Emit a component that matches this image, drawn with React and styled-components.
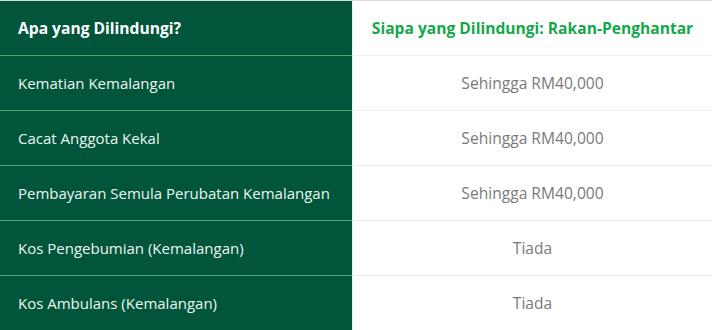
import React from 'react';
import styled, { createGlobalStyle } from 'styled-components';

const GlobalStyle = createGlobalStyle`
  html, body {
    margin: 0;
    padding: 0;
    background: #ffffff;
  }
  body {
    font-family: "Open Sans", "Noto Sans", sans-serif;
  }
`;

const Table = styled.div`
  width: 712px;
  display: grid;
  grid-template-columns: 352px 1fr;
  border-top: 1px solid #d9dcdb;
`;

const LabelCell = styled.div`
  height: 54px;
  display: flex;
  align-items: center;
  padding: 0 18px;
  background: #00553a;
  color: ${props => (props.head ? '#ffffff' : '#eef5f1')};
  font-size: ${props => (props.head ? 15.6 : 15)}px;
  font-weight: ${props => (props.head ? 700 : 400)};
  border-bottom: 1px solid ${props => (props.last ? '#00553a' : '#43ad6f')};
`;

const ValueCell = styled.div`
  height: 54px;
  display: flex;
  align-items: center;
  justify-content: center;
  background: #ffffff;
  border-left: 1px solid #eeeeee;
  border-bottom: 1px solid ${props => (props.last ? '#ffffff' : '#eeeeee')};
  color: ${props => (props.head ? '#15a84b' : '#7a7a7a')};
  font-size: 15.6px;
  font-weight: ${props => (props.head ? 700 : 400)};
`;

const rows = [
  ['Kematian Kemalangan', 'Sehingga RM40,000'],
  ['Cacat Anggota Kekal', 'Sehingga RM40,000'],
  ['Pembayaran Semula Perubatan Kemalangan', 'Sehingga RM40,000'],
  ['Kos Pengebumian (Kemalangan)', 'Tiada'],
  ['Kos Ambulans (Kemalangan)', 'Tiada'],
];

const App = () => (
  <>
    <GlobalStyle />
    <Table>
      <LabelCell head>Apa yang Dilindungi?</LabelCell>
      <ValueCell head>Siapa yang Dilindungi: Rakan-Penghantar</ValueCell>
      {rows.map(([label, value], i) => (
        <React.Fragment key={label}>
          <LabelCell last={i === rows.length - 1}>{label}</LabelCell>
          <ValueCell last={i === rows.length - 1}>{value}</ValueCell>
        </React.Fragment>
      ))}
    </Table>
  </>
);

export default App;
